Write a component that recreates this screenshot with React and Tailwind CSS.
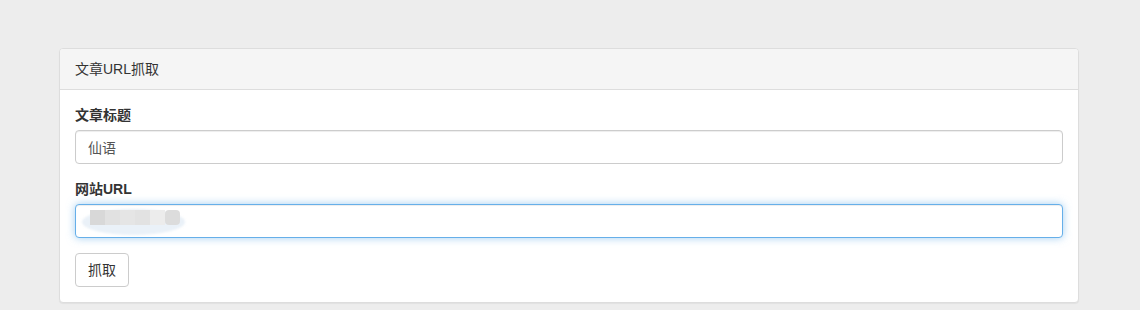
import React from "react";

export default function App() {
  const font = { fontFamily: '"Liberation Sans", "Noto Sans CJK SC", sans-serif' };
  return (
    <div className="min-h-[310px] w-full bg-[#ededed] pt-[48px] pl-[59px] pr-[61px] text-[14px] text-[#333]" style={font}>
      <div className="rounded-[4px] border border-[#dddddd] bg-white shadow-[0_1px_1px_rgba(0,0,0,0.05)]">
        <div className="rounded-t-[3px] border-b border-[#dddddd] bg-[#f5f5f5] px-[15px] py-[10px] leading-[20px] text-[#333]">
          文章URL抓取
        </div>
        <div className="p-[15px]">
          <div className="mb-[15px]">
            <label className="mb-[5px] block font-bold leading-[20px]">文章标题</label>
            <input
              readOnly
              value="仙语"
              className="block h-[34px] w-full rounded-[4px] border border-[#cccccc] bg-white px-[12px] py-[6px] text-[14px] leading-[20px] text-[#555] shadow-[inset_0_1px_1px_rgba(0,0,0,0.075)] outline-none"
              style={font}
            />
          </div>
          <div className="mb-[15px]">
            <label className="mb-[5px] block font-bold leading-[20px]">网站URL</label>
            <div className="relative">
              <input
                readOnly
                value=""
                className="block h-[34px] w-full rounded-[4px] border border-[#66afe9] bg-white px-[12px] py-[6px] text-[14px] leading-[20px] text-[#555] shadow-[inset_0_1px_1px_rgba(0,0,0,0.075),0_0_8px_rgba(102,175,233,0.6)] outline-none"
                style={font}
              />
              <div className="pointer-events-none absolute left-[7px] top-[5px] h-[26px] w-[103px] rounded-[50%] bg-[#eaf1f8] blur-[1px]" />
              <div className="pointer-events-none absolute left-[15px] top-[6px] flex h-[15px] blur-[0.5px]">
                <div className="h-full w-[15px] bg-[#d8d8d8]" />
                <div className="h-full w-[15px] bg-[#e1e1e1]" />
                <div className="h-full w-[15px] bg-[#e5e5e5]" />
                <div className="h-full w-[15px] bg-[#e2e2e2]" />
                <div className="h-full w-[15px] bg-[#ececec]" />
                <div className="h-full w-[15px] rounded-[4px] bg-[#dcdcdc]" />
              </div>
            </div>
          </div>
          <button
            className="h-[34px] rounded-[4px] border border-[#cccccc] bg-white px-[12px] py-[6px] text-[14px] leading-[20px] text-[#333]"
            style={font}
          >
            抓取
          </button>
        </div>
      </div>
    </div>
  );
}
